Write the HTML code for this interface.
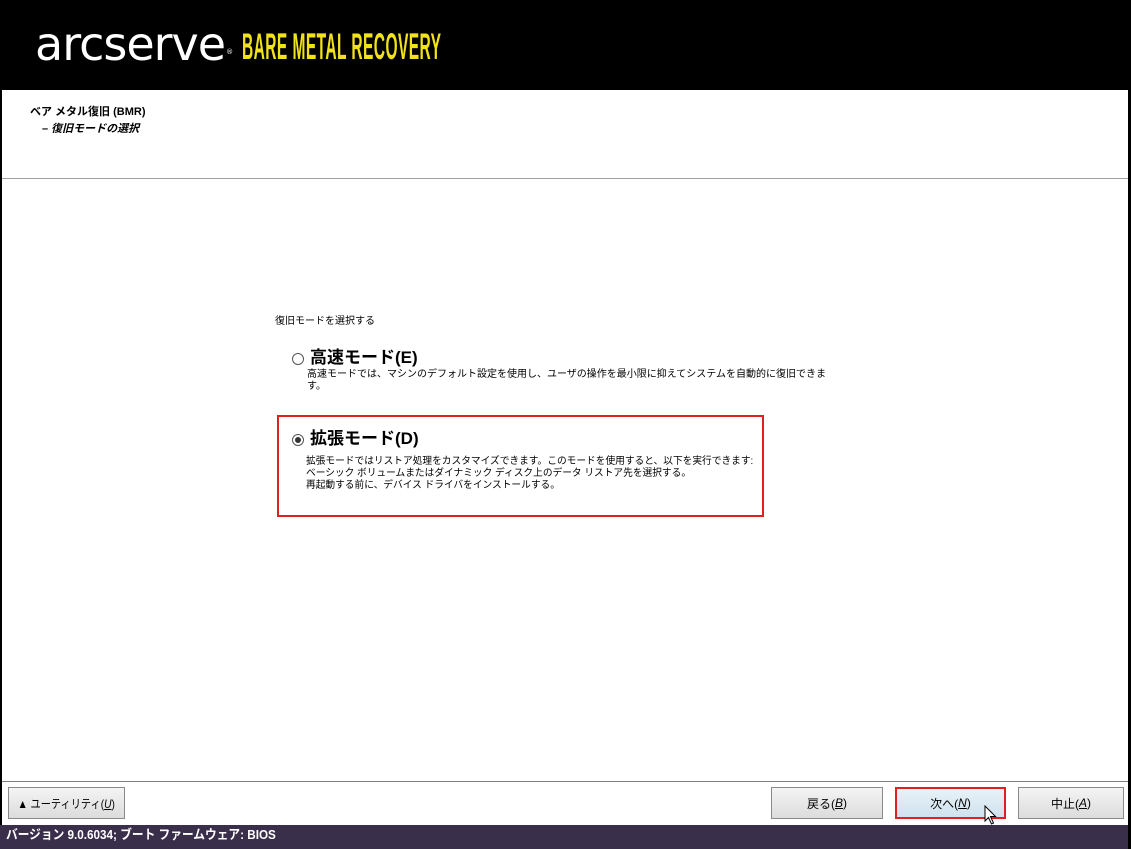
<!DOCTYPE html>
<html><head><meta charset="utf-8"><style>
*{margin:0;padding:0;box-sizing:border-box}
body{width:1131px;height:849px;background:#000;position:relative;overflow:hidden;font-family:"Liberation Sans","Noto Sans CJK JP",sans-serif}
.main{position:absolute;left:2px;top:90px;width:1126px;height:735px;background:#fff}
.hdr{position:absolute;left:0;top:0;width:1131px;height:90px;background:#000}
.logo{position:absolute;left:35px;top:19px;color:#fff;font-size:46px;font-family:"DejaVu Sans",sans-serif;line-height:50px;letter-spacing:-1px}
.bmr{position:absolute;left:242px;top:27px;color:#f2e21a;font-size:37px;font-weight:bold;font-family:"Liberation Sans",sans-serif;transform:scaleX(0.42);transform-origin:left;white-space:nowrap;line-height:40px;letter-spacing:1px}
.t1{position:absolute;left:28px;top:13px;font-size:11px;font-weight:bold}
.t2{position:absolute;left:40px;top:30px;font-size:11px;font-weight:bold;font-style:italic}
.hl{position:absolute;left:0;top:88px;width:1126px;height:1px;background:#a0a0a0}
.sm{font-size:10px;color:#000}
.bl{position:absolute;left:0;top:691px;width:1126px;height:1px;background:#808080}
.btn{position:absolute;top:697px;height:32px;border:1px solid #8a8a8a;background:linear-gradient(#f4f4f4,#dcdcdc);font-size:12px;display:flex;align-items:center;justify-content:center;white-space:nowrap}
.status{position:absolute;left:0;top:825px;width:1128px;height:24px;background:#3a2f4b;color:#fff;font-size:13px;font-weight:bold;padding-left:6px;line-height:20px}
.radio{display:inline-block;width:12px;height:12px;border:1px solid #555;border-radius:50%;vertical-align:middle;position:relative;margin-right:6px;background:#fff}
.radio.on::after{content:"";position:absolute;left:2px;top:2px;width:6px;height:6px;border-radius:50%;background:#333}
.opt{position:absolute;font-size:17px;font-weight:bold;white-space:nowrap}
</style></head><body>
<div class="hdr"><div class="logo">arcserve<span style="font-size:7px;vertical-align:top;position:relative;top:8px;margin-left:1px">®</span></div><div class="bmr">BARE METAL RECOVERY</div></div>
<div class="main">
<div class="t1">ベア メタル復旧 (BMR)</div>
<div class="t2">– 復旧モードの選択</div>
<div class="hl"></div>
<div class="sm" style="position:absolute;left:273px;top:222px">復旧モードを選択する</div>
<div class="opt" style="left:290px;top:253px"><span class="radio"></span>高速モード<span>(E)</span></div>
<div class="sm" style="position:absolute;left:305px;top:279px;line-height:12px;width:532px">高速モードでは、マシンのデフォルト設定を使用し、ユーザの操作を最小限に抑えてシステムを自動的に復旧できます。</div>
<div style="position:absolute;left:275px;top:325px;width:487px;height:102px;border:2px solid #e02020"></div>
<div class="opt" style="left:290px;top:334px"><span class="radio on"></span>拡張モード<span>(D)</span></div>
<div class="sm" style="position:absolute;left:304px;top:366px;line-height:12px;white-space:nowrap;transform:scaleX(0.97);transform-origin:left">拡張モードではリストア処理をカスタマイズできます。このモードを使用すると、以下を実行できます:<br>ベーシック ボリュームまたはダイナミック ディスク上のデータ リストア先を選択する。<br>再起動する前に、デバイス ドライバをインストールする。</div>
<div class="bl"></div>
<div class="btn" style="left:6px;width:117px"><span style="transform:scaleX(0.85);display:inline-block">▲ ユーティリティ(<u><i>U</i></u>)</span></div>
<div class="btn" style="left:769px;width:112px">戻る(<u><i>B</i></u>)</div>
<div class="btn" style="left:893px;width:111px;border:2px solid #e02020;background:linear-gradient(#e8f2f8,#cfe2ee)">次へ(<u><i>N</i></u>)</div>
<div class="btn" style="left:1016px;width:106px">中止(<u><i>A</i></u>)</div>
</div>
<svg style="position:absolute;left:984px;top:805px" width="14" height="22" viewBox="0 0 14 22"><path d="M1 1 L1 16 L4.5 12.5 L7.5 19 L9.5 18 L6.5 11.5 L11.5 11.5 Z" fill="#fff" stroke="#000" stroke-width="1"/></svg>
<div class="status"><span style="display:inline-block;transform:scaleX(0.9);transform-origin:left">バージョン 9.0.6034; ブート ファームウェア: BIOS</span></div>
</body></html>
